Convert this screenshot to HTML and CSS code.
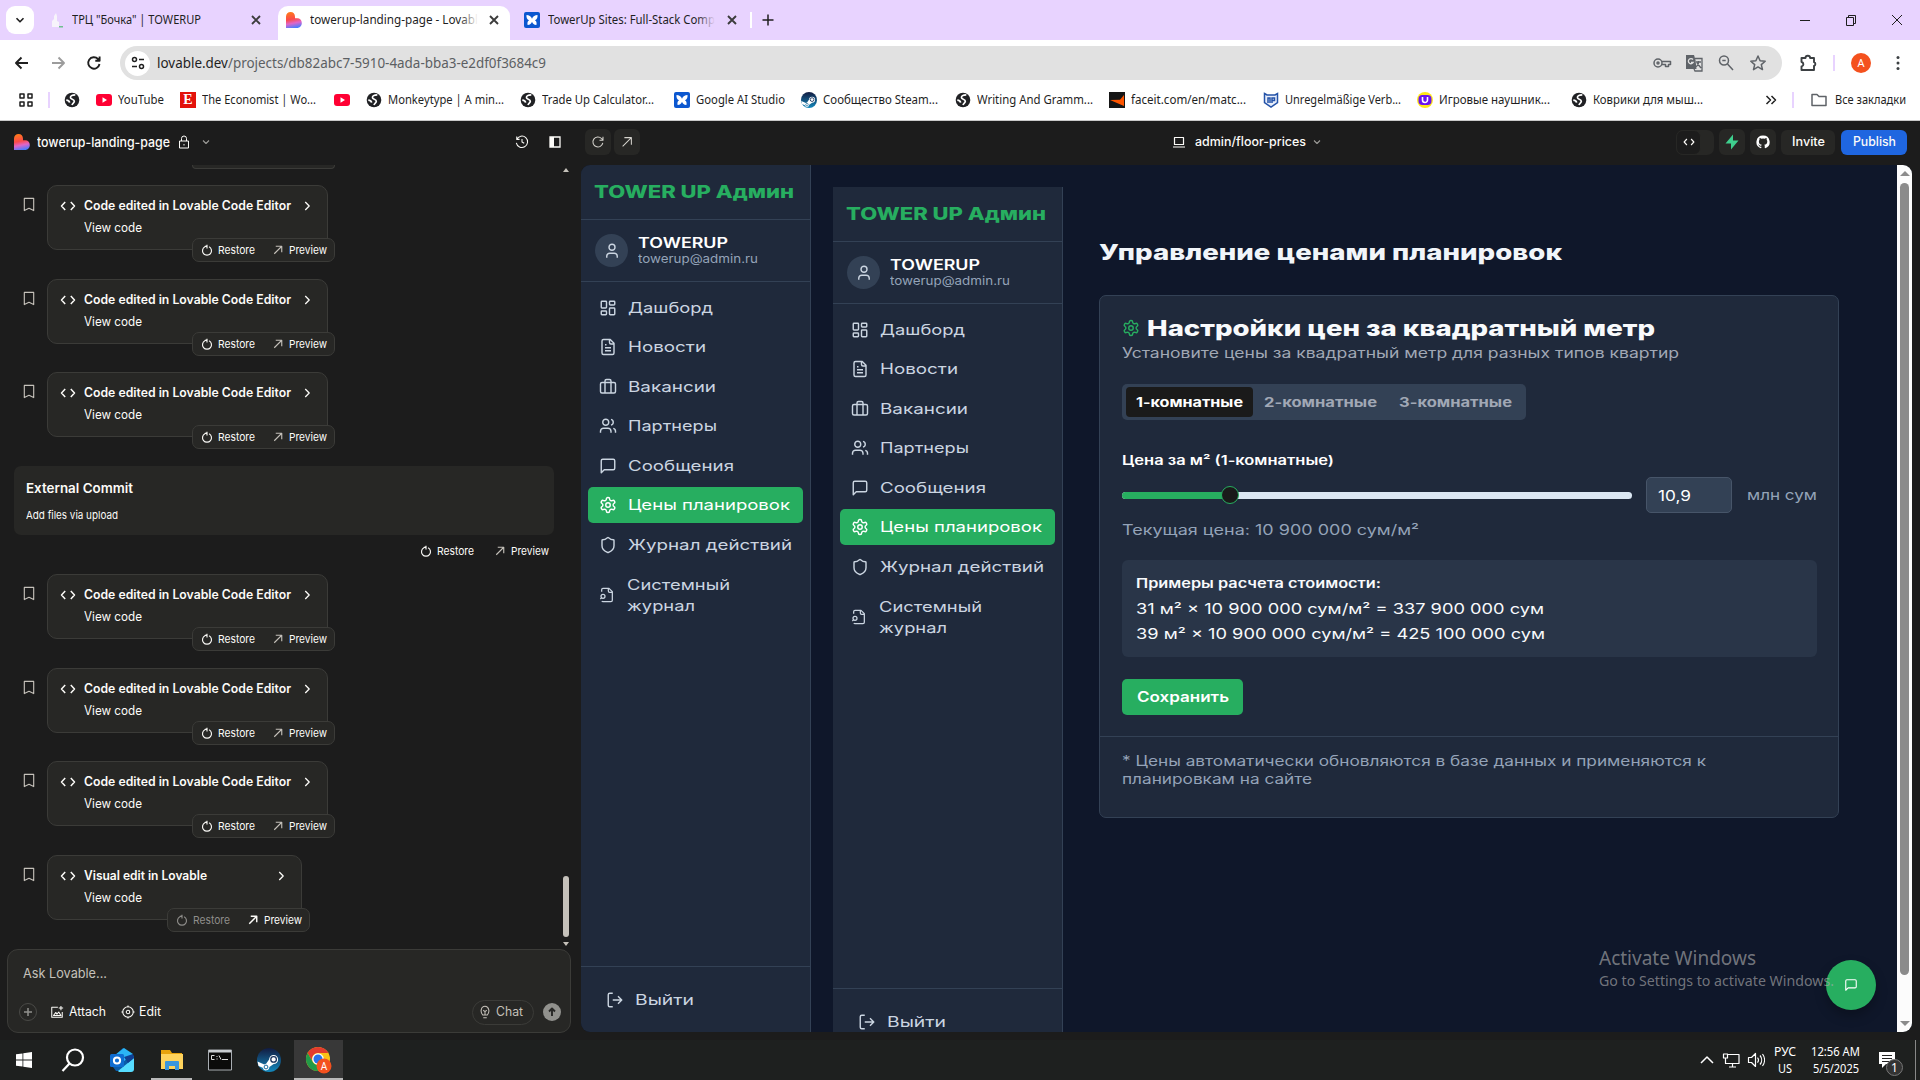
FILE: index.html
```html
<!DOCTYPE html>
<html lang="ru">
<head>
<meta charset="utf-8">
<title>towerup-landing-page - Lovable</title>
<link rel="stylesheet" href="styles.css">
</head>
<body>
<svg class="defs" width="0" height="0">
  <defs>
    <linearGradient id="heart" x1="0.3" y1="0" x2="0.5" y2="1"><stop offset="0" stop-color="#ff7a1a"/><stop offset=".45" stop-color="#fb4a4a"/><stop offset=".7" stop-color="#e065c8"/><stop offset="1" stop-color="#4b7bff"/></linearGradient>
    <linearGradient id="steamg" x1="0" y1="0" x2="0" y2="1"><stop offset="0" stop-color="#121b40"/><stop offset="1" stop-color="#1389bd"/></linearGradient>
  </defs>
  <symbol id="i-heart" viewBox="0 0 16 16"><path fill="url(#heart)" d="M0 4.8C0 2 2 0 4.6 0S9 2 9 4.8v1.4h2.2c2.6 0 4.6 2 4.6 4.8s-2 5-4.8 5H0z"/></symbol>
  <symbol id="i-studio" viewBox="0 0 16 16"><rect width="16" height="16" rx="2" fill="#0b57d0"/><path fill="#fff" d="M2.5 3c2.500 0 4.500 1.200 5.500 3.700C9 4.200 11 3 13.500 3c.3 2.500-.5 4.400-2.600 5.300 1.500.9 2 2.500 1.500 4.700-2.400 0-3.800-1.200-4.400-3.200-.6 2-2 3.200-4.400 3.200-.5-2.200 0-3.800 1.500-4.700C3 7.400 2.200 5.500 2.500 3z"/></symbol>
  <symbol id="i-globe" viewBox="0 0 16 16"><circle cx="8" cy="8" r="7.300" fill="#202124"/><path fill="none" stroke="#fff" stroke-width="1.700" d="M11.300 2.800C8 2.800 6.200 4 6.500 5.800c.3 1.600 3.800 1.200 3.800 3.400 0 1.700-1.800 1.800-2.300 3.800M2.300 8.200c2.500.2 3 .8 3.300 2.400"/></symbol>
  <symbol id="i-yt" viewBox="0 0 16 16"><rect y="2" width="16" height="12" rx="3" fill="#ff0033"/><path fill="#fff" d="m6.500 5.300 4.500 2.700-4.500 2.700z"/></symbol>
  <symbol id="i-steam" viewBox="0 0 24 24"><circle cx="12" cy="12" r="12" fill="url(#steamg)"/><path fill="#fff" d="m.5 13.500 6.800 2.900a3.400 3.400 0 0 1 1.800-.6l3-4.400a4.500 4.500 0 1 1 4.600 4.600l-4.300 3.100a3.400 3.400 0 0 1-6.700.7L1.500 18z"/><circle cx="16.600" cy="11.400" r="2.800" fill="none" stroke="#17335e" stroke-width="1.300"/><circle cx="9" cy="19" r="1.900" fill="none" stroke="#176a9c"/></symbol>
  <symbol id="i-x" viewBox="0 0 16 16"><path d="m4 4 8 8M12 4l-8 8"/></symbol>
  <symbol id="i-down" viewBox="0 0 16 16"><path d="m4 6 4 4 4-4"/></symbol>
  <symbol id="i-right" viewBox="0 0 16 16"><path d="m6 3.500 4.500 4.500L6 12.500"/></symbol>
  <symbol id="i-code" viewBox="0 0 16 16"><path d="M5.200 4 1.500 8l3.700 4M10.800 4l3.700 4-3.700 4"/></symbol>
  <symbol id="i-mark" viewBox="0 0 16 16"><path d="M3 1.500h10v13l-5-2.500-5 2.500z"/></symbol>
  <symbol id="i-restore" viewBox="0 0 16 16"><path d="M5.200 3.600A6 6 0 1 0 10.800 3.600M8 1v5M8 2.200 5 3.500"/></symbol>
  <symbol id="i-ne" viewBox="0 0 16 16"><path d="M3 13 13 3M5 3h8v8"/></symbol>
  <symbol id="i-reload" viewBox="0 0 16 16"><path d="M13.500 9A5.700 5.700 0 1 1 12 4l1.500 1.500M13.700 2v4h-4"/></symbol>
  <symbol id="i-dash" viewBox="0 0 24 24"><rect x="3" y="3" width="7" height="9" rx="1"/><rect x="14" y="3" width="7" height="5" rx="1"/><rect x="14" y="12" width="7" height="9" rx="1"/><rect x="3" y="16" width="7" height="5" rx="1"/></symbol>
  <symbol id="i-file" viewBox="0 0 24 24"><path d="M15 2H6a2 2 0 0 0-2 2v16a2 2 0 0 0 2 2h12a2 2 0 0 0 2-2V7zM14 2v4a2 2 0 0 0 2 2h4M10 9H8M16 13H8M16 17H8"/></symbol>
  <symbol id="i-case" viewBox="0 0 24 24"><rect x="2" y="6" width="20" height="14" rx="2"/><path d="M16 20V4a2 2 0 0 0-2-2h-4a2 2 0 0 0-2 2v16"/></symbol>
  <symbol id="i-users" viewBox="0 0 24 24"><path d="M16 21v-2a4 4 0 0 0-4-4H6a4 4 0 0 0-4 4v2M22 21v-2a4 4 0 0 0-3-3.870M16 3.130a4 4 0 0 1 0 7.750"/><circle cx="9" cy="7" r="4"/></symbol>
  <symbol id="i-msg" viewBox="0 0 24 24"><path d="M21 15a2 2 0 0 1-2 2H7l-4 4V5a2 2 0 0 1 2-2h14a2 2 0 0 1 2 2z"/></symbol>
  <symbol id="i-gear" viewBox="0 0 24 24"><path d="M12.220 2h-.44a2 2 0 0 0-2 2v.18a2 2 0 0 1-1 1.730l-.43.25a2 2 0 0 1-2 0l-.15-.08a2 2 0 0 0-2.730.73l-.22.38a2 2 0 0 0 .73 2.730l.15.1a2 2 0 0 1 1 1.720v.51a2 2 0 0 1-1 1.740l-.15.09a2 2 0 0 0-.73 2.730l.22.38a2 2 0 0 0 2.730.73l.15-.08a2 2 0 0 1 2 0l.43.25a2 2 0 0 1 1 1.730V20a2 2 0 0 0 2 2h.44a2 2 0 0 0 2-2v-.18a2 2 0 0 1 1-1.730l.43-.25a2 2 0 0 1 2 0l.15.08a2 2 0 0 0 2.730-.73l.22-.39a2 2 0 0 0-.73-2.730l-.15-.08a2 2 0 0 1-1-1.740v-.5a2 2 0 0 1 1-1.740l.15-.09a2 2 0 0 0 .73-2.730l-.22-.38a2 2 0 0 0-2.730-.73l-.15.08a2 2 0 0 1-2 0l-.43-.25a2 2 0 0 1-1-1.730V4a2 2 0 0 0-2-2z"/><circle cx="12" cy="12" r="3"/></symbol>
  <symbol id="i-shield" viewBox="0 0 24 24"><path d="M20 13c0 5-3.500 7.500-7.660 8.950a1 1 0 0 1-.67-.01C7.500 20.500 4 18 4 13V6a1 1 0 0 1 1-1c2 0 4.500-1.200 6.240-2.720a1.170 1.170 0 0 1 1.520 0C14.510 3.810 17 5 19 5a1 1 0 0 1 1 1z"/></symbol>
  <symbol id="i-log" viewBox="0 0 24 24"><path d="M14 2v4a2 2 0 0 0 2 2h4M4.270 21A2 2 0 0 0 6 22h12a2 2 0 0 0 2-2V7l-5-5H6a2 2 0 0 0-2 2v3M2 18l2-2"/><circle cx="6" cy="14" r="3"/></symbol>
  <symbol id="i-out" viewBox="0 0 24 24"><path d="M9 21H5a2 2 0 0 1-2-2V5a2 2 0 0 1 2-2h4M16 17l5-5-5-5M21 12H9"/></symbol>
  <symbol id="i-user" viewBox="0 0 24 24"><path d="M19 21v-2a4 4 0 0 0-4-4H9a4 4 0 0 0-4 4v2"/><circle cx="12" cy="7" r="4"/></symbol>
</svg>

<header class="browser">
  <div class="tabs">
    <div class="tab-search"><svg class="s14 ln2"><use href="#i-down"/></svg></div>
    <div class="tab tab-first">
      <svg class="s16" viewBox="0 0 16 16"><path fill="#f7f4fb" d="M4 15V9l2-2V4l2-3 1 3v5l2 1v5z"/><path fill="#6fbf8f" d="M11 14h4v1.500h-4z"/></svg>
      <span class="t" data-w="129">ТРЦ "Бочка" | TOWERUP</span>
      <svg class="s16 ln2 tab-x"><use href="#i-x"/></svg>
    </div>
    <div class="tab tab-active">
      <svg class="s16"><use href="#i-heart"/></svg>
      <span class="t fade" data-w="168">towerup-landing-page - Lovabl</span>
      <svg class="s16 ln2 tab-x"><use href="#i-x"/></svg>
    </div>
    <div class="tab tab-last">
      <svg class="s16"><use href="#i-studio"/></svg>
      <span class="t fade fade-lilac" data-w="167">TowerUp Sites: Full-Stack Comp</span>
      <svg class="s16 ln2 tab-x"><use href="#i-x"/></svg>
    </div>
    <i class="tab-sep"></i>
    <svg class="s16 ln15 tab-plus" viewBox="0 0 16 16"><path d="M8 2.500v11M2.500 8h11"/></svg>
    <div class="win">
      <svg class="s16 ln1" viewBox="0 0 16 16"><path d="M3 8.500h10"/></svg>
      <svg class="s16 ln1" viewBox="0 0 16 16"><path d="M3.500 5.500h7v8h-7zM5.500 5.500v-2h7v8h-2"/></svg>
      <svg class="s16 ln1" viewBox="0 0 16 16"><path d="m3 3 10 10M13 3 3 13"/></svg>
    </div>
  </div>
  <div class="toolbar">
    <svg class="s20 ln2" viewBox="0 0 20 20"><path d="M16 10H4.500M9.500 4.500 4 10l5.500 5.500"/></svg>
    <svg class="s20 ln2 off" viewBox="0 0 20 20"><path d="M4 10h11.500M10.500 4.500 16 10l-5.500 5.500"/></svg>
    <svg class="s20 ln2" viewBox="0 0 20 20"><path d="M15.500 11A5.700 5.700 0 1 1 14 6l1.500 1.500M15.600 3.500v4.300h-4.300"/></svg>
    <div class="omni">
      <div class="site"><svg class="s16 ln15" viewBox="0 0 16 16"><circle cx="4.500" cy="4.500" r="2"/><path d="M9 4.500h5M2 11.500h5"/><circle cx="11.500" cy="11.500" r="2"/></svg></div>
      <span class="t url" data-w="389">lovable.dev<em>/projects/db82abc7-5910-4ada-bba3-e2df0f3684c9</em></span>
      <div class="omni-icons">
        <svg class="s20 ln15" viewBox="0 0 20 20"><circle cx="6" cy="10" r="4"/><circle cx="6" cy="10" r="1"/><path d="M10 8.500h8.500v3h-2v2h-3v-2H10"/></svg>
        <svg class="s20" viewBox="0 0 20 20"><path fill="#5f6368" d="M2 2h8l1.500 5 1 9H2z"/><path fill="none" stroke="#5f6368" stroke-width="1.300" d="M11 5.500h7V18h-7l-1-2M12 9h5M14.500 8v1c0 2-1 4-3 5M13 10l4 5"/><path fill="none" stroke="#e1e1e1" stroke-width="1.300" d="M9 6.500a2.600 2.600 0 1 0 .3 2.800H7"/></svg>
        <svg class="s20 ln15" viewBox="0 0 20 20"><circle cx="8" cy="7.500" r="4.500"/><path d="m11.500 11 5.500 6M6.300 7.500h3.400"/></svg>
        <svg class="s20 ln15" viewBox="0 0 20 20"><path d="m10 3 2.100 4.700 5.100.5-3.900 3.400 1.200 5-4.500-2.700-4.500 2.700 1.200-5-3.900-3.400 5.100-.5z"/></svg>
      </div>
    </div>
    <div class="tb-right">
      <svg class="s20 ln2" viewBox="0 0 20 20"><path d="M3.500 5h4a2.300 2.300 0 0 1 4.600 0H16v4.200a2 2 0 0 1 0 3.800V17H3.500v-3.500c2.500-.5 2.500-4 0-4.500z"/></svg>
      <i class="vsep"></i>
      <b class="ava">A</b>
      <svg class="s20" viewBox="0 0 20 20"><g fill="#3c4043"><circle cx="10" cy="4.500" r="1.500"/><circle cx="10" cy="10" r="1.500"/><circle cx="10" cy="15.500" r="1.500"/></g></svg>
    </div>
  </div>
  <nav class="marks">
    <svg class="s16 ln15 apps" viewBox="0 0 16 16"><path d="M2 2h4v4H2zM10 2h4v4h-4zM2 10h4v4H2zM10 10h4v4h-4z"/></svg>
    <i class="vsep"></i>
    <a class="bare"><svg class="s16"><use href="#i-globe"/></svg></a>
    <a class="short"><svg class="s16"><use href="#i-yt"/></svg><span class="t" data-w="46">YouTube</span></a>
    <a><b class="eco">E</b><span class="t" data-w="114">The Economist | Wo...</span></a>
    <a class="bare"><svg class="s16"><use href="#i-yt"/></svg></a>
    <a><svg class="s16"><use href="#i-globe"/></svg><span class="t" data-w="116">Monkeytype | A min...</span></a>
    <a><svg class="s16"><use href="#i-globe"/></svg><span class="t" data-w="112">Trade Up Calculator...</span></a>
    <a class="mid"><svg class="s16"><use href="#i-studio"/></svg><span class="t" data-w="89">Google AI Studio</span></a>
    <a><svg class="s16"><use href="#i-steam"/></svg><span class="t" data-w="115">Сообщество Steam...</span></a>
    <a><svg class="s16"><use href="#i-globe"/></svg><span class="t" data-w="116">Writing And Gramm...</span></a>
    <a><svg class="s16" viewBox="0 0 16 16"><path fill="#161616" d="M0 0h16v16H0z"/><path fill="#ff5500" d="M15 3v11L1 8l10-.3z"/></svg><span class="t" data-w="115">faceit.com/en/matc...</span></a>
    <a><svg class="s16" viewBox="0 0 16 16"><path fill="#e8eefb" stroke="#2453a8" stroke-width="1.500" d="M1.500 1.500 4 3h8l2.500-1.500v9L8 15l-6.500-4.500z"/><path fill="none" stroke="#2453a8" stroke-width="1.500" d="M5 11V6h2v5M9 11V6h2.500v2.500H9"/></svg><span class="t" data-w="116">Unregelmäßige Verb...</span></a>
    <a><svg class="s16" viewBox="0 0 16 16"><circle cx="8" cy="8" r="8" fill="#ffe818"/><rect x="1.500" y="3" width="13" height="10" rx="4" fill="#6a12f0"/><path fill="none" stroke="#fff" stroke-width="1.600" d="M5.500 5v3a2.500 2.500 0 0 0 5 0V5"/></svg><span class="t" data-w="111">Игровые наушник...</span></a>
    <a><svg class="s16"><use href="#i-globe"/></svg><span class="t" data-w="110">Коврики для мыш...</span></a>
    <div class="marks-end">
      <svg class="s16 ln15" viewBox="0 0 16 16"><path d="m3.500 4 4 4-4 4M8.500 4l4 4-4 4"/></svg>
      <i class="vsep"></i>
      <svg class="s16 ln15 grey" viewBox="0 0 16 16"><path d="M1 2.500h5l2 2h7v9H1z"/></svg>
      <span class="t" data-w="71">Все закладки</span>
    </div>
  </nav>
</header>

<main class="app">
  <section class="chat">
    <div class="chat-top">
      <svg class="s16"><use href="#i-heart"/></svg>
      <span class="t proj" data-w="133">towerup-landing-page</span>
      <svg class="s14 ln1" viewBox="0 0 14 14"><path d="M2.500 6h9v7h-9zM4.500 6V3.500a2.500 2.500 0 0 1 5 0V6M7 9v1.500"/></svg>
      <svg class="s12 ln15 dim"><use href="#i-down"/></svg>
      <div class="chat-tools">
        <svg class="s14 ln12" viewBox="0 0 16 16"><path d="M2 5a6.500 6.500 0 1 1-.5 4M2 1.800V5h3.200M8 4.500V8l2.500 1.500"/></svg>
        <svg class="s14" viewBox="0 0 14 14"><path fill="none" stroke="#fcfbf8" stroke-width="1.300" d="M2 2h10v10H2z"/><path fill="#fcfbf8" d="M2 2h4v10H2z"/></svg>
      </div>
    </div>
    <div class="chat-list">
      <div class="pill-cut"></div>
      <div class="feed">
        <div class="msg"><svg class="s16 ln12 bm"><use href="#i-mark"/></svg><div class="card"><div class="card-h"><svg class="s16 ln15"><use href="#i-code"/></svg><span class="t" data-w="207">Code edited in Lovable Code Editor</span><svg class="s14 ln15 arrow"><use href="#i-right"/></svg></div><span class="t sub" data-w="58">View code</span><div class="pill"><svg class="s12 ln15"><use href="#i-restore"/></svg><span class="t" data-w="37">Restore</span><svg class="s12 ln15 ne"><use href="#i-ne"/></svg><span class="t" data-w="38">Preview</span></div></div></div>
        <div class="msg"><svg class="s16 ln12 bm"><use href="#i-mark"/></svg><div class="card"><div class="card-h"><svg class="s16 ln15"><use href="#i-code"/></svg><span class="t" data-w="207">Code edited in Lovable Code Editor</span><svg class="s14 ln15 arrow"><use href="#i-right"/></svg></div><span class="t sub" data-w="58">View code</span><div class="pill"><svg class="s12 ln15"><use href="#i-restore"/></svg><span class="t" data-w="37">Restore</span><svg class="s12 ln15 ne"><use href="#i-ne"/></svg><span class="t" data-w="38">Preview</span></div></div></div>
        <div class="msg"><svg class="s16 ln12 bm"><use href="#i-mark"/></svg><div class="card"><div class="card-h"><svg class="s16 ln15"><use href="#i-code"/></svg><span class="t" data-w="207">Code edited in Lovable Code Editor</span><svg class="s14 ln15 arrow"><use href="#i-right"/></svg></div><span class="t sub" data-w="58">View code</span><div class="pill"><svg class="s12 ln15"><use href="#i-restore"/></svg><span class="t" data-w="37">Restore</span><svg class="s12 ln15 ne"><use href="#i-ne"/></svg><span class="t" data-w="38">Preview</span></div></div></div>
        <div class="commit"><span class="t commit-t" data-w="107">External Commit</span><span class="t commit-s" data-w="92">Add files via upload</span></div>
        <div class="commit-act"><svg class="s12 ln15"><use href="#i-restore"/></svg><span class="t" data-w="37">Restore</span><svg class="s12 ln15 ne"><use href="#i-ne"/></svg><span class="t" data-w="38">Preview</span></div>
        <div class="msg"><svg class="s16 ln12 bm"><use href="#i-mark"/></svg><div class="card"><div class="card-h"><svg class="s16 ln15"><use href="#i-code"/></svg><span class="t" data-w="207">Code edited in Lovable Code Editor</span><svg class="s14 ln15 arrow"><use href="#i-right"/></svg></div><span class="t sub" data-w="58">View code</span><div class="pill"><svg class="s12 ln15"><use href="#i-restore"/></svg><span class="t" data-w="37">Restore</span><svg class="s12 ln15 ne"><use href="#i-ne"/></svg><span class="t" data-w="38">Preview</span></div></div></div>
        <div class="msg"><svg class="s16 ln12 bm"><use href="#i-mark"/></svg><div class="card"><div class="card-h"><svg class="s16 ln15"><use href="#i-code"/></svg><span class="t" data-w="207">Code edited in Lovable Code Editor</span><svg class="s14 ln15 arrow"><use href="#i-right"/></svg></div><span class="t sub" data-w="58">View code</span><div class="pill"><svg class="s12 ln15"><use href="#i-restore"/></svg><span class="t" data-w="37">Restore</span><svg class="s12 ln15 ne"><use href="#i-ne"/></svg><span class="t" data-w="38">Preview</span></div></div></div>
        <div class="msg"><svg class="s16 ln12 bm"><use href="#i-mark"/></svg><div class="card"><div class="card-h"><svg class="s16 ln15"><use href="#i-code"/></svg><span class="t" data-w="207">Code edited in Lovable Code Editor</span><svg class="s14 ln15 arrow"><use href="#i-right"/></svg></div><span class="t sub" data-w="58">View code</span><div class="pill"><svg class="s12 ln15"><use href="#i-restore"/></svg><span class="t" data-w="37">Restore</span><svg class="s12 ln15 ne"><use href="#i-ne"/></svg><span class="t" data-w="38">Preview</span></div></div></div>
        <div class="msg"><svg class="s16 ln12 bm"><use href="#i-mark"/></svg><div class="card card-short"><div class="card-h"><svg class="s16 ln15"><use href="#i-code"/></svg><span class="t" data-w="123">Visual edit in Lovable</span><svg class="s14 ln15 arrow"><use href="#i-right"/></svg></div><span class="t sub" data-w="58">View code</span><div class="pill"><svg class="s12 ln15 faded"><use href="#i-restore"/></svg><span class="t faded" data-w="37">Restore</span><svg class="s12 ln2 ne"><use href="#i-ne"/></svg><span class="t" data-w="38">Preview</span></div></div></div>
      </div>
      <div class="chat-sb"><i class="tri up"></i><i class="thumb"></i><i class="tri dn"></i></div>
    </div>
    <div class="composer">
      <span class="t ask" data-w="84">Ask Lovable...</span>
      <div class="comp-row">
        <i class="round"><svg class="s12 ln15" viewBox="0 0 12 12"><path d="M6 2v8M2 6h8"/></svg></i>
        <svg class="s14 ln12 at-i" viewBox="0 0 16 16"><path d="M9 2.500H2v11.500h12V8M12.500 1v5M10 3.500h5M4 12l2.500-3.500L8 10.500 10 8l2.500 4z"/></svg>
        <span class="t" data-w="37">Attach</span>
        <svg class="s14 ln12 ed-i" viewBox="0 0 16 16"><circle cx="8" cy="8" r="6"/><circle cx="8" cy="8" r="2"/><path d="M8 .5v2M8 13.500v2M.5 8h2M13.500 8h2"/></svg>
        <span class="t" data-w="22">Edit</span>
        <div class="chat-btn"><svg class="s14 ln12" viewBox="0 0 16 16"><path d="M5.500 11.500C2 8 3.500 1.500 8 1.500s6 6.500 2.500 10zM6 14.500h4M8 11V7.500L6 6M8 7.500 10 6"/></svg><span class="t" data-w="27">Chat</span></div>
        <i class="send"><svg class="s12 ln2" viewBox="0 0 12 12"><path d="M6 10V3M3 5.500 6 2.500l3 3"/></svg></i>
      </div>
    </div>
  </section>

  <section class="preview">
    <div class="pv-top">
      <i class="btn sq"><svg class="s14 ln12"><use href="#i-reload"/></svg></i>
      <i class="btn sq"><svg class="s14 ln12"><use href="#i-ne"/></svg></i>
      <div class="route">
        <svg class="s14 ln12" viewBox="0 0 14 14"><path d="M2.500 2.500h9v7h-9zM1 12h12"/></svg>
        <span class="t" data-w="111">admin/floor-prices</span>
        <svg class="s12 ln15 dim"><use href="#i-down"/></svg>
      </div>
      <div class="pv-acts">
        <i class="switch"><b><svg class="s12 ln15"><use href="#i-code"/></svg></b></i>
        <i class="btn"><svg class="s16" viewBox="0 0 16 16"><path fill="#3ecf8e" d="M9 .5v6h5.500L7 15.500v-6H1.500z"/></svg></i>
        <i class="btn"><svg class="s14" viewBox="0 0 16 16"><path fill="#fff" d="M8 .5a7.500 7.500 0 0 0-2.400 14.600c.4 0 .5-.2.500-.4v-1.400c-2 .4-2.600-1-2.700-1.300-.3-.6-.7-.8-.9-1 1.300-.2 1.500 1.300 2.300 1.400.5.100 1-.1 1.400-.3 0-.5.300-.8.500-1-1.800-.2-3.400-.9-3.400-3.700 0-.9.300-1.500.8-2-.1-.2-.4-1 .1-2 .7 0 1.500.4 2.100.8a7 7 0 0 1 3.600 0c.6-.4 1.400-.8 2.100-.8.500 1 .2 1.800.1 2 .5.500.8 1.200.8 2 0 2.800-1.700 3.500-3.400 3.700.3.300.5.700.5 1.400v2.200c0 .2.100.4.500.4A7.500 7.500 0 0 0 8 .5z"/></svg></i>
        <button class="invite"><span class="t" data-w="33">Invite</span></button>
        <button class="publish"><span class="t" data-w="43">Publish</span></button>
      </div>
    </div>

    <div class="frame">
      <div class="page">
        <aside class="side">
          <div class="brand"><span class="t" data-w="200">TOWER UP Админ</span></div>
          <div class="who"><i class="face"><svg class="s18 ln2"><use href="#i-user"/></svg></i><div><span class="t name" data-w="90">TOWERUP</span><span class="t mail" data-w="120">towerup@admin.ru</span></div></div>
          <nav class="menu">
            <a><svg class="s18 ln2"><use href="#i-dash"/></svg><span class="t" data-w="85">Дашборд</span></a>
            <a><svg class="s18 ln2"><use href="#i-file"/></svg><span class="t" data-w="78">Новости</span></a>
            <a><svg class="s18 ln2"><use href="#i-case"/></svg><span class="t" data-w="88">Вакансии</span></a>
            <a><svg class="s18 ln2"><use href="#i-users"/></svg><span class="t" data-w="89">Партнеры</span></a>
            <a><svg class="s18 ln2"><use href="#i-msg"/></svg><span class="t" data-w="106">Сообщения</span></a>
            <a class="on"><svg class="s18 ln2"><use href="#i-gear"/></svg><span class="t" data-w="162">Цены планировок</span></a>
            <a><svg class="s18 ln2"><use href="#i-shield"/></svg><span class="t" data-w="164">Журнал действий</span></a>
            <a class="two"><svg class="s16 ln2"><use href="#i-log"/></svg><div><span class="t" data-w="103">Системный</span><span class="t" data-w="68">журнал</span></div></a>
          </nav>
          <div class="exit"><svg class="s18 ln2"><use href="#i-out"/></svg><span class="t" data-w="59">Выйти</span></div>
        </aside>
        <aside class="side inner">
          <div class="brand"><span class="t" data-w="200">TOWER UP Админ</span></div>
          <div class="who"><i class="face"><svg class="s18 ln2"><use href="#i-user"/></svg></i><div><span class="t name" data-w="90">TOWERUP</span><span class="t mail" data-w="120">towerup@admin.ru</span></div></div>
          <nav class="menu">
            <a><svg class="s18 ln2"><use href="#i-dash"/></svg><span class="t" data-w="85">Дашборд</span></a>
            <a><svg class="s18 ln2"><use href="#i-file"/></svg><span class="t" data-w="78">Новости</span></a>
            <a><svg class="s18 ln2"><use href="#i-case"/></svg><span class="t" data-w="88">Вакансии</span></a>
            <a><svg class="s18 ln2"><use href="#i-users"/></svg><span class="t" data-w="89">Партнеры</span></a>
            <a><svg class="s18 ln2"><use href="#i-msg"/></svg><span class="t" data-w="106">Сообщения</span></a>
            <a class="on"><svg class="s18 ln2"><use href="#i-gear"/></svg><span class="t" data-w="162">Цены планировок</span></a>
            <a><svg class="s18 ln2"><use href="#i-shield"/></svg><span class="t" data-w="164">Журнал действий</span></a>
            <a class="two"><svg class="s16 ln2"><use href="#i-log"/></svg><div><span class="t" data-w="103">Системный</span><span class="t" data-w="68">журнал</span></div></a>
          </nav>
          <div class="exit"><svg class="s18 ln2"><use href="#i-out"/></svg><span class="t" data-w="59">Выйти</span></div>
        </aside>
        <div class="content">
          <h1><span class="t" data-w="463">Управление ценами планировок</span></h1>
          <div class="panel">
            <div class="panel-b">
              <h2><svg class="s18 ln2"><use href="#i-gear"/></svg><span class="t" data-w="508">Настройки цен за квадратный метр</span></h2>
              <p class="lead"><span class="t" data-w="557">Установите цены за квадратный метр для разных типов квартир</span></p>
              <div class="seg"><b class="on"><span class="t" data-w="107">1-комнатные</span></b><b><span class="t" data-w="113">2-комнатные</span></b><b><span class="t" data-w="113">3-комнатные</span></b></div>
              <p class="label"><span class="t" data-w="212">Цена за м² (1-комнатные)</span></p>
              <div class="price"><div class="track"><i class="fill"></i><i class="knob"></i></div><div class="num"><span class="t" data-w="33">10,9</span></div><span class="t unit" data-w="70">млн сум</span></div>
              <p class="now"><span class="t" data-w="297">Текущая цена: 10 900 000 сум/м²</span></p>
              <div class="calc">
                <span class="t calc-h" data-w="245">Примеры расчета стоимости:</span>
                <span class="t" data-w="408">31 м² × 10 900 000 сум/м² = 337 900 000 сум</span>
                <span class="t" data-w="409">39 м² × 10 900 000 сум/м² = 425 100 000 сум</span>
              </div>
              <button class="save"><span class="t" data-w="92">Сохранить</span></button>
            </div>
            <div class="panel-f">
              <span class="t" data-w="584">* Цены автоматически обновляются в базе данных и применяются к</span>
              <span class="t" data-w="190">планировкам на сайте</span>
            </div>
          </div>
        </div>
      </div>
      <div class="pv-sb"><i class="tri up"></i><i class="thumb"></i><i class="tri dn"></i></div>
      <div class="bubble"><svg class="s14 ln2"><use href="#i-msg"/></svg></div>
      <div class="activate"><span class="t act-h" data-w="157">Activate Windows</span><span class="t" data-w="235">Go to Settings to activate Windows.</span></div>
    </div>
  </section>
</main>

<footer class="taskbar">
  <div class="task"><svg class="s16" viewBox="0 0 16 16"><path fill="#fff" d="M0 2.300 6.500 1.400v6.200H0zM7.300 1.300 16 0v7.600H7.300zM0 8.400h6.500v6.200L0 13.700zM7.300 8.400H16V16l-8.700-1.300z"/></svg></div>
  <div class="task"><svg class="s24" viewBox="0 0 24 24"><g fill="none" stroke="#fff" stroke-width="2.200"><circle cx="14" cy="9.500" r="8"/><path d="M8.500 15.500 1.500 23"/></g></svg></div>
  <div class="task"><svg class="s24" viewBox="0 0 24 24"><path fill="#0a5ba8" d="M3 9 13 0l11 8v13l-2 2H6l-3-4z"/><path fill="#2bb5f5" d="m5 7 9-7 9 6-9 7z"/><path fill="#56dcff" d="m8 23 16-13v11q0 3-3 3H9z"/><path fill="#103f91" d="m14 9 9-3 1 4-6 5z"/><rect y="6" width="14" height="13" rx="1.500" fill="#0f6cd0"/><circle cx="7" cy="12.500" r="3.100" fill="none" stroke="#fff" stroke-width="2"/></svg></div>
  <div class="task open"><svg class="s24" viewBox="0 0 24 24"><path fill="#e8a30c" d="M1 2h9l2 3h10v6H1z"/><path fill="#ffd35c" d="M1 6h22v15H1z"/><path fill="#3a96dd" d="M5 14q0-1 1-1h12q1 0 1 1v8h-4v-4H9v4H5z"/></svg></div>
  <div class="task"><svg class="s24" viewBox="0 0 24 24"><path fill="#0b0b0b" stroke="#a8adb2" d="M.5 2h23v20H.5z"/><path fill="#c8ccd0" d="M1 2h22v2.500H1z"/><path stroke="#ddd" fill="none" d="M6.500 7.500h-3v4h3M9 8v1M9 10.500v1M11 7.500l2 4M14 11.500h6"/></svg></div>
  <div class="task"><svg class="s24"><use href="#i-steam"/></svg></div>
  <div class="task open current"><svg class="s28" viewBox="0 0 28 28"><circle cx="13" cy="13" r="12" fill="#fbc116"/><path fill="#e33b2e" d="M2.600 7A12 12 0 0 1 23.400 7H13a6 6 0 0 0-5.200 9z"/><path fill="#229a48" d="M2.600 7A12 12 0 0 0 13 25l5.200-9a6 6 0 0 1-10.400 0z"/><circle cx="13" cy="13" r="5.800" fill="#fff"/><circle cx="13" cy="13" r="4.500" fill="#2b71e8"/><circle cx="19" cy="20" r="7.500" fill="#f4511e"/><text x="19" y="23.500" text-anchor="middle" class="ctext">A</text></svg></div>
  <div class="tray">
    <svg class="s16 ln15" viewBox="0 0 16 16"><path d="m2 11 6-6 6 6"/></svg>
    <svg class="s18 ln12" viewBox="0 0 18 18"><path d="M5 3.500h12v9H3.500V9M7 16h7M10.500 12.500V16M1.500 3h4v4h-4zM3.500 7v3"/></svg>
    <svg class="s18 ln12" viewBox="0 0 18 18"><path d="M1.500 6.500h3l4-4v13l-4-4h-3zM10.500 6.500a4 4 0 0 1 0 5M13 4.500a7 7 0 0 1 0 9M15.500 3a10 10 0 0 1 0 12"/></svg>
    <div class="two-l"><span class="t" data-w="22">РУС</span><span class="t" data-w="14">US</span></div>
    <div class="two-l clock"><span class="t" data-w="49">12:56 AM</span><span class="t" data-w="46">5/5/2025</span></div>
    <svg class="note" viewBox="0 0 26 26"><path fill="#fff" d="M1 2h16v12h-9l-4 4v-4H1z"/><path stroke="#222" d="M4 5.500h10M4 8.500h10M4 11.500h7"/><circle cx="16.500" cy="17.500" r="8" fill="#333" stroke="#777"/><text x="16.500" y="22" text-anchor="middle" class="ntext">1</text></svg>
    <i class="peek"></i>
  </div>
</footer>
<script src="fit.js"></script>
</body>
</html>
```
FILE: styles.css
```css
* { box-sizing: border-box; }
html, body { margin: 0; width: 1920px; height: 1080px; overflow: hidden; }
body { font: 12px/16px "Noto Sans", sans-serif; background: #1c1c1c; display: flex; flex-direction: column; }
h1, h2, p { margin: 0; }
i { font-style: normal; display: block; flex: none; }
button { border: 0; padding: 0; font: inherit; color: inherit; display: flex; align-items: center; justify-content: center; }
.defs { position: absolute; }
svg { flex: none; display: block; fill: none; }
.t { display: block; flex: none; white-space: nowrap; text-align: left; }
.t > span { display: inline-block; transform-origin: 0 50%; white-space: nowrap; }
.s12 { width: 12px; height: 12px; }
.s14 { width: 14px; height: 14px; }
.s16 { width: 16px; height: 16px; }
.s18 { width: 18px; height: 18px; }
.s20 { width: 20px; height: 20px; }
.s24 { width: 24px; height: 24px; }
.s28 { width: 28px; height: 28px; }
.ln1, .ln12, .ln15, .ln2 { stroke: currentColor; stroke-width: 1; }
.ln12 { stroke-width: 1.2; }
.ln15 { stroke-width: 1.5; }
.ln2 { stroke-width: 1.9; }
.ln12, .ln15, .ln2 { stroke-linejoin: round; }

/* browser window */
.browser { height: 121px; background: #fff; border-bottom: 1px solid #c9c9c9; color: #1f1f1f; flex: none; }
.tabs { height: 40px; background: #e8d3ff; display: flex; align-items: center; }
.tab-search { width: 28px; height: 28px; margin-left: 6px; border-radius: 9px; background: #fff; display: flex; align-items: center; justify-content: center; }
.tab { display: flex; align-items: center; height: 34px; gap: 8px; align-self: flex-end; padding: 0 8px 6px; }
.tab-x { margin-left: auto; color: #3c3c3c; }
.tab-first { width: 238px; margin-left: 6px; padding-right: 14px; }
.tab-active { width: 232px; background: #fff; border-radius: 10px 10px 0 0; }
.tab-last { width: 236px; padding-left: 14px; padding-right: 6px; }
.fade { position: relative; }
.fade::after { content: ""; position: absolute; inset: 0 0 0 auto; width: 18px; background: linear-gradient(90deg, transparent, #fff); }
.fade-lilac::after { background: linear-gradient(90deg, transparent, #e8d3ff); }
.tab-sep { width: 2px; height: 16px; background: #fff; margin-left: 4px; }
.tab-plus { margin-left: 8px; }
.win { margin-left: auto; display: flex; gap: 30px; padding-right: 15px; }
.toolbar { height: 46px; display: flex; align-items: center; gap: 16px; padding-left: 12px; }
.off { color: #9c9c9c; }
.omni { width: 1662px; height: 34px; border-radius: 17px; background: #e1e1e1; display: flex; align-items: center; }
.site { width: 25px; height: 25px; margin-left: 5px; border-radius: 50%; background: #fff; display: flex; align-items: center; justify-content: center; }
.url { margin-left: 7px; font-size: 14px; }
.url em { font-style: normal; color: #5c5f63; }
.omni-icons { margin-left: auto; display: flex; gap: 12px; padding-right: 14px; color: #5f6368; }
.tb-right { display: flex; align-items: center; color: #3c4043; }
.tb-right .vsep { margin: 0 16px 0 15px; }
.vsep { width: 2px; height: 16px; background: #e8d3ff; }
.ava { width: 20px; height: 20px; border-radius: 50%; background: #f4511e; color: #fff; font: 11px/20px "Noto Sans", sans-serif; text-align: center; margin-right: 17px; }
.marks { height: 34px; display: flex; align-items: center; padding-left: 18px; margin-top: -3px; }
.marks a { display: flex; align-items: center; gap: 6px; width: 154px; flex: none; }
.marks .bare { width: 32px; }
.marks .short { width: 84px; }
.marks .mid { width: 127px; }
.marks > .vsep { margin: 0 14px; }
.eco { width: 16px; height: 16px; background: #e3120b; color: #fff; font: bold 14px/16px "Liberation Serif", serif; text-align: center; }
.marks-end { margin-left: auto; display: flex; align-items: center; padding-right: 14px; }
.marks-end .vsep { margin: 0 17px 0 13px; }
.marks-end .t { margin-left: 8px; }
.grey { color: #5f6368; }

/* workspace */
.app { height: 919px; display: flex; flex: none; font-family: Inter, sans-serif; color: #fcfbf8; }
.chat { width: 581px; display: flex; flex-direction: column; }
.chat-top { height: 44px; display: flex; align-items: center; padding: 0 19px 2px 14px; }
.proj { margin: 0 7px 0 7px; font-size: 13px; font-weight: 500; }
.chat-top .dim { margin-left: 9px; }
.dim { color: #9b9a97; }
.chat-tools { margin-left: auto; display: flex; gap: 19px; }
.chat-list { height: 784px; display: grid; grid-template-columns: 562px 1fr; grid-template-rows: 4px 780px; overflow: hidden; }
.pill-cut { width: 143px; height: 4px; margin-left: 192px; border: 1px solid #3b3b38; border-top: 0; border-radius: 0 0 7px 7px; background: #272725; }
.chat-sb { grid-column: 2; grid-row: 1 / 3; display: flex; flex-direction: column; align-items: center; width: 8px; padding: 3px 0 3px; }
.tri { width: 0; height: 0; border: 3px solid transparent; }
.tri.up { border-bottom: 4px solid #c5c1ba; border-top: 0; }
.tri.dn { border-top: 4px solid #c5c1ba; border-bottom: 0; margin-top: 5px; }
.chat-sb .thumb { width: 6px; height: 61px; border-radius: 3px; background: #c5c1ba; margin-top: auto; }
.feed { grid-column: 1; padding-top: 16px; }
.msg { display: flex; margin-bottom: 28.500px; height: 65px; }
.bm { margin: 12px 10px 0 21px; height: 15px; color: #c5c1ba; }
.card { width: 281px; height: 65px; border: 1px solid #3b3b38; border-radius: 10px; background: #272725; position: relative; }
.card-h { display: flex; align-items: center; gap: 8px; margin: 12px 13px 0 12px; height: 16px; font-size: 12.500px; font-weight: 600; }
.arrow { margin-left: auto; }
.sub { margin: 6px 0 0 36px; font-size: 12.500px; }
.pill { position: absolute; right: -8px; top: 52px; width: 143px; height: 24px; border: 1px solid #3b3b38; border-radius: 7px; background: #272725; display: flex; align-items: center; padding: 0 7px 0 8px; font-size: 11px; gap: 5px; }
.pill .ne, .commit-act .ne { margin-left: auto; color: #c5c1ba; }
.pill .ln2.ne { color: #fcfbf8; }
.faded { color: #8f8e8b; }
.card-short { width: 255px; }
.card-short .pill { right: -9px; }
.commit { width: 540px; height: 69px; margin-left: 14px; border-radius: 7px; background: #272725; padding: 14px 12px; }
.commit-t { font-size: 13.500px; font-weight: 600; }
.commit-s { font-size: 11px; margin-top: 11px; }
.commit-act { display: flex; align-items: center; gap: 5px; width: 129px; height: 16px; margin: 8px 0 15.500px 420px; font-size: 11px; }
.composer { width: 564px; height: 84px; margin-left: 7px; border: 1px solid #3b3b38; border-radius: 11px; background: #272725; }
.ask { margin: 15px 0 0 15px; font-size: 13.500px; color: #c5c1ba; }
.comp-row { display: flex; align-items: center; height: 26px; margin-top: 18px; padding: 0 9px 0 11px; font-size: 12.500px; }
.round, .send { width: 18px; height: 18px; border-radius: 50%; border: 1px solid #4a4a47; display: flex; align-items: center; justify-content: center; color: #91918d; }
.send { background: #91918d; color: #272725; border: 0; margin-left: 9px; }
.at-i { margin: 0 5px 0 13px; }
.ed-i { margin: 0 4px 0 15px; }
.chat-btn { margin-left: auto; width: 62px; height: 25px; border: 1px solid #3b3b38; border-radius: 13px; display: flex; align-items: center; padding-left: 5px; gap: 4px; color: #c5c1ba; }

.preview { flex: 1; min-width: 0; }
.pv-top { height: 44px; display: flex; align-items: center; padding: 0 13px 2px 4px; gap: 3px; }
.btn { width: 26px; height: 26px; border-radius: 6px; background: #272725; display: flex; align-items: center; justify-content: center; }
.sq { color: #d5d3cd; }
.route { display: flex; align-items: center; gap: 9px; margin-left: 529px; font-size: 12.500px; font-weight: 500; }
.route .dim { margin-left: -4px; }
.pv-acts { margin-left: auto; display: flex; gap: 5px; align-items: center; font-size: 12.500px; font-weight: 500; }
.switch { width: 38px; height: 25px; border-radius: 7px; background: #272725; }
.switch b { display: flex; width: 25px; height: 25px; align-items: center; justify-content: center; border: 1px solid #272725; background: #1c1c1c; border-radius: 7px; }
.invite { width: 54px; height: 25px; border-radius: 6px; background: #272725; }
.publish { width: 66px; height: 25px; border-radius: 6px; background: #1f66e0; margin-left: 1px; }

/* previewed site */
.frame { width: 1331px; height: 867px; border-radius: 9px; overflow: hidden; display: flex; position: relative; background: #0f172a; }
.page { width: 1316px; display: flex; color: #cbd5e1; font-size: 14.500px; line-height: 21.500px; }
.side { width: 230px; height: 867px; background: #1f293b; border-right: 1px solid #334155; display: flex; flex-direction: column; flex: none; }
.side.inner { margin: 22px 0 0 22px; }
.brand { height: 55px; border-bottom: 1px solid #334155; padding: 17px 13px 0; font-weight: 800; font-size: 17px; color: #27ae60; }
.who { height: 62px; border-bottom: 1px solid #334155; display: flex; align-items: center; padding: 0 14px; gap: 10px; }
.face { width: 33px; height: 33px; border-radius: 50%; background: #334155; display: flex; align-items: center; justify-content: center; }
.name { color: #fff; font-weight: 600; font-size: 14px; line-height: 17px; }
.mail { color: #94a3b8; font-size: 12px; line-height: 16px; }
.menu { padding: 7px; display: flex; flex-direction: column; gap: 3.500px; }
.menu a { height: 36px; display: flex; align-items: center; padding: 1px 0 0 11px; gap: 10.500px; border-radius: 5px; }
.menu .on { background: #27ae60; color: #fff; }
.menu .two { height: 58px; }
.menu .two svg { margin-right: 1.500px; }
.exit { margin-top: auto; height: 66px; border-top: 1px solid #334155; display: flex; align-items: center; padding-left: 25px; gap: 11px; }
.content { padding: 75px 0 0 36px; }
h1 { font-weight: 800; font-size: 22px; line-height: 24px; color: #f1f5f9; }
.panel { width: 740px; height: 523px; margin-top: 31px; border: 1px solid #334155; border-radius: 7px; background: #1f293b; }
.panel-b { height: 441px; padding: 21px 21px 0 22px; border-bottom: 1px solid #334155; }
h2 { display: flex; align-items: center; gap: 7px; font-weight: 800; font-size: 22px; line-height: 22px; color: #f8fafc; }
h2 svg { color: #27ae60; }
.lead { color: #a1a8b5; font-size: 14px; line-height: 18px; margin-top: 5px; }
.seg { display: flex; align-items: center; width: 404px; height: 36px; margin-top: 22px; padding: 0 4px; border-radius: 5px; background: #334155; color: #a1a8b5; font-size: 13px; line-height: 18px; }
.seg b { font-weight: 700; padding: 6px 11px; height: 30px; border-radius: 4px; }
.seg .on { background: #1a1a1a; color: #fff; padding: 6px 10px; }
.label { color: #fff; font-weight: 600; font-size: 13px; line-height: 18px; margin-top: 31px; }
.price { display: flex; align-items: center; margin-top: 8px; height: 36px; }
.track { width: 510px; height: 7px; border-radius: 4px; background: #dbe7f3; position: relative; }
.fill { width: 108px; height: 7px; border-radius: 4px 0 0 4px; background: #27ae60; }
.knob { position: absolute; left: 99px; top: -6px; width: 18px; height: 18px; border-radius: 50%; background: #1a1a1a; border: 1px solid #27ae60; }
.num { width: 86px; height: 36px; margin-left: 14px; border: 1px solid #475569; border-radius: 5px; background: #334155; color: #fff; padding: 7px 11px; font-size: 14px; }
.unit { margin-left: 15px; color: #94a3b8; }
.now { color: #94a3b8; font-size: 14px; line-height: 18px; margin-top: 8px; }
.calc { width: 695px; height: 97px; margin-top: 21px; border-radius: 6px; background: #293548; padding: 11px 14px; color: #f8fafc; line-height: 25px; font-size: 14.500px; }
.calc-h { font-size: 13px; font-weight: 600; }
.save { width: 121px; height: 36px; margin-top: 22px; border-radius: 5px; background: #27ae60; color: #fff; font-weight: 600; font-size: 14px; }
.panel-f { padding: 15px 22px; color: #94a3b8; font-size: 14px; line-height: 18px; }
.pv-sb { width: 15px; background: #fcfcfc; display: flex; flex-direction: column; align-items: center; padding: 6px 0; }
.pv-sb .tri { border-left-width: 5px; border-right-width: 5px; }
.pv-sb .tri.up { border-bottom: 5px solid #8b8b8b; }
.pv-sb .tri.dn { border-top: 5px solid #8b8b8b; margin-top: auto; }
.pv-sb .thumb { width: 9px; height: 792px; margin-top: 7px; border-radius: 5px; background: #8b8b8b; }
.bubble { position: absolute; left: 1245px; top: 795px; width: 50px; height: 50px; border-radius: 50%; background: #27ae60; display: flex; align-items: center; justify-content: center; box-shadow: 0 6px 12px rgba(0,0,0,.25); color: #fff; }
.activate { position: absolute; left: 1018px; top: 782px; font: 15px/22px "Noto Sans", sans-serif; color: rgba(170,170,170,.65); }
.act-h { font-size: 19px; }

/* taskbar */
.taskbar { height: 40px; background: #1e201f; display: flex; color: #fff; font-family: "Noto Sans", sans-serif; }
.task { width: 49px; height: 40px; display: flex; align-items: center; justify-content: center; padding-right: 2px; }
.open { border-bottom: 2px solid #b9b9b9; padding: 2px 0 0; width: 41px; margin: 0 4px; }
.current { width: 49px; margin: 0; background: #383838; }
.ctext { font: 10px Roboto, sans-serif; fill: #fff; }
.ntext { font: 12px "Noto Sans", sans-serif; fill: #fff; }
.tray { margin-left: auto; display: flex; align-items: center; }
.tray > svg { margin-right: 7px; }
.two-l { display: flex; flex-direction: column; align-items: center; line-height: 17px; font-size: 12px; }
.tray .two-l { margin-left: 2px; }
.tray .clock { margin: 0 18px 0 15px; }
.note { width: 26px; height: 26px; margin-top: 6px; }
.tray > .note { margin-right: 11px; }
.peek { width: 1px; height: 40px; background: #888; margin-right: 4px; }
```
FILE: fit.js
```js
// Stretch each label horizontally so that it fills its declared width.
document.querySelectorAll('[data-w]').forEach(function (el) {
  var inner = document.createElement('span');
  while (el.firstChild) inner.appendChild(el.firstChild);
  el.appendChild(inner);
  var want = Number(el.dataset.w);
  var have = inner.getBoundingClientRect().width;
  inner.style.transform = 'scaleX(' + want / have + ')';
  el.style.width = want + 'px';
});
```
